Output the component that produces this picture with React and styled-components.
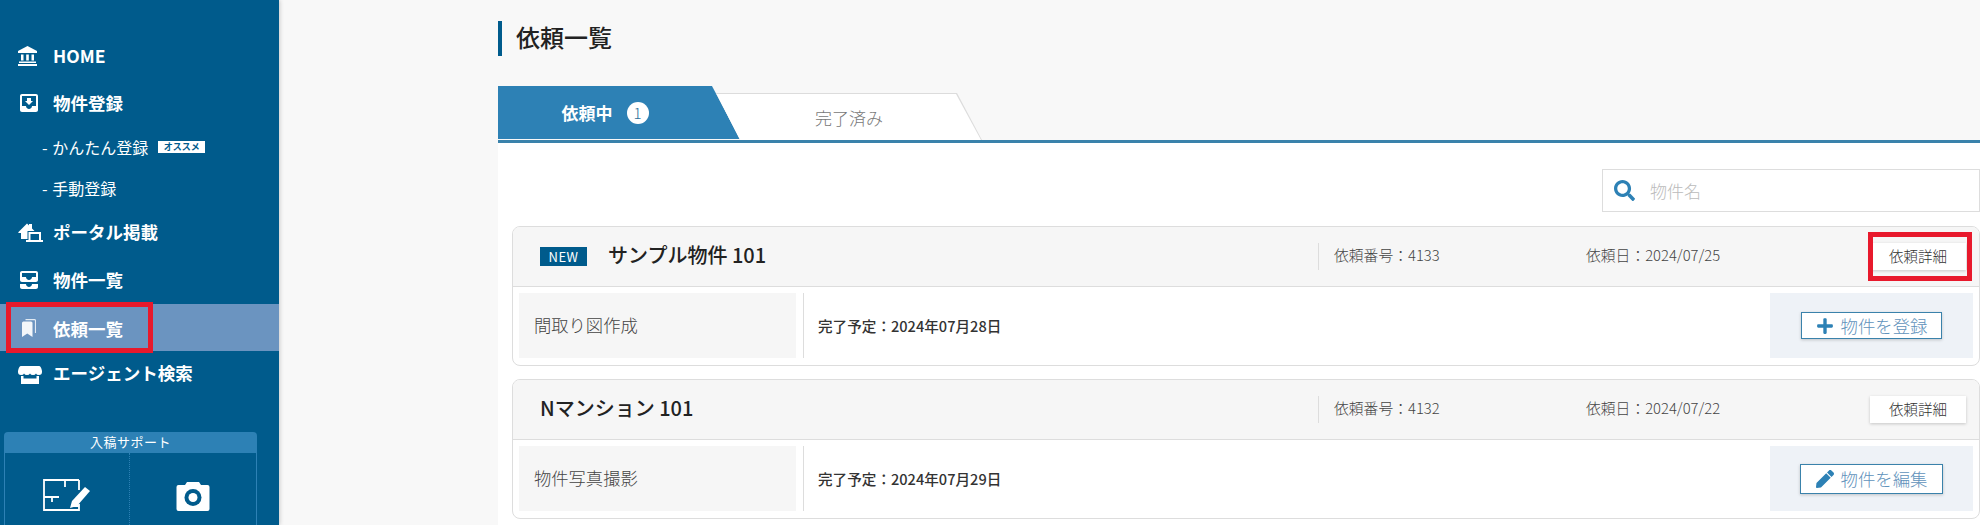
import React from 'react';
import styled, {createGlobalStyle} from 'styled-components';
import {FaPlus, FaPen, FaSearch} from 'react-icons/fa';
import {MdMoveToInbox, MdAllInbox} from 'react-icons/md';

const blue = '#005b8c';
const midBlue = '#2d81b5';
const red = '#e8192c';
const font = '"Noto Sans CJK JP", "Noto Sans", sans-serif';

const GlobalStyle = createGlobalStyle`
    html, body {
        margin: 0;
        height: 100%;
        overflow: hidden;
        background: #f8f8f8;
        font-family: ${font};
        color: #333;
    }
`;

const Page = styled.div`
    display: flex;
    width: 1980px;
    height: 525px;
    overflow: hidden;
`;

const Sidebar = styled.aside`
    flex: 0 0 279px;
    padding-top: 32px;
    background: ${blue};
    box-shadow: 1px 0 4px rgba(0, 0, 0, .18);
    color: #fff;
`;

const NavItem = styled.div`
    position: relative;
    display: flex;
    align-items: center;
    height: ${props => props.$height || 47}px;
    background: ${props => (props.$active ? '#6b94c0' : 'transparent')};
    font-size: 17.5px;
    font-weight: 700;
`;

const NavIcon = styled.span`
    display: flex;
    flex: 0 0 53px;
    box-sizing: border-box;
    padding-left: ${props => props.$left}px;
    font-size: 24px;
`;

const NavLabel = styled.span`
    margin-bottom: ${props => (props.$lift || 0) * 2}px;
`;

const SubItem = styled.div`
    display: flex;
    align-items: center;
    height: 41.5px;
    padding-left: 42px;
    font-size: 16px;
    font-weight: 400;
    word-spacing: 1px;
`;

const Recommend = styled.span`
    margin-left: 10px;
    padding: 0 5.5px;
    background: #fff;
    color: ${blue};
    font-size: 9px;
    font-weight: 700;
    line-height: 12px;
`;

const Highlight = styled.div`
    position: absolute;
    top: ${props => props.$top}px;
    left: ${props => props.$left}px;
    width: ${props => props.$width}px;
    height: ${props => props.$height}px;
    box-sizing: border-box;
    border: 5px solid ${red};
    pointer-events: none;
`;

const Support = styled.section`
    width: 253px;
    margin: 34px 0 0 4px;
`;

const SupportTitle = styled.div`
    height: 21px;
    background: ${midBlue};
    border-radius: 4px 4px 0 0;
    font-size: 13px;
    line-height: 20px;
    letter-spacing: .5px;
    text-align: center;
`;

const SupportGrid = styled.div`
    display: grid;
    grid-template-columns: 125px 1fr;
    height: 80px;
    border: 1px solid ${midBlue};
    border-top: 0;
`;

const SupportCell = styled.div`
    display: flex;
    justify-content: center;
    padding-top: 26px;
    border-right: ${props => (props.$divided ? `1px dotted ${midBlue}` : '0')};
`;

const Main = styled.main`
    flex: 1;
    padding: 21px 0 0 219px;
    min-width: 0;
`;

const Title = styled.h1`
    height: 35px;
    margin: 0 0 30px;
    padding-left: 14px;
    border-left: 4px solid ${blue};
    color: #222;
    font-size: 24px;
    font-weight: 500;
    line-height: 31px;
`;

const Tabs = styled.div`
    display: flex;
    align-items: flex-end;
    box-sizing: border-box;
    height: 57px;
    border-bottom: 3px solid #3a82ab;
`;

const ActiveTab = styled.div`
    display: flex;
    align-items: center;
    justify-content: center;
    gap: 14px;
    flex: 0 0 242px;
    height: 53px;
    margin-bottom: 1px;
    padding-right: 28px;
    box-sizing: border-box;
    clip-path: polygon(0 0, 214px 0, 242px 100%, 0 100%);
    background: ${midBlue};
    color: #fff;
    font-size: 17px;
    font-weight: 700;
`;

const Count = styled.span`
    display: flex;
    align-items: center;
    justify-content: center;
    width: 22px;
    height: 22px;
    border-radius: 50%;
    background: #fff;
    color: #2d6f99;
    font-size: 15px;
    font-weight: 300;
`;

const IdleTabEdge = styled.div`
    flex: 0 0 266px;
    height: 47px;
    margin-left: -24px;
    clip-path: polygon(0 0, 241px 0, 266px 100%, 24px 100%);
    background: #dcdcdc;
`;

const IdleTab = styled.div`
    display: flex;
    align-items: center;
    justify-content: center;
    height: 46px;
    margin-top: 1px;
    clip-path: polygon(0 0, 240px 0, 265px 100%, 24px 100%);
    background: #fff;
    color: #777;
    font-size: 17px;
    font-weight: 300;
`;

const Panel = styled.div`
    height: 400px;
    padding: 26px 0 0 14px;
    background: #fff;
`;

const SearchRow = styled.div`
    display: flex;
    justify-content: flex-end;
    margin-bottom: 14px;
`;

const SearchBox = styled.div`
    display: flex;
    align-items: center;
    gap: 15px;
    width: 378px;
    height: 43px;
    padding-left: 11px;
    box-sizing: border-box;
    border: 1px solid #ddd;
    color: #bbb;
    font-size: 17px;
    font-weight: 300;
    svg {
        color: ${midBlue};
        font-size: 21px;
    }
`;

const Card = styled.article`
    height: 140px;
    margin-bottom: 13px;
    box-sizing: border-box;
    border: 1px solid #ddd;
    border-radius: 8px;
    overflow: hidden;
`;

const CardHeader = styled.header`
    display: flex;
    align-items: center;
    height: 60px;
    box-sizing: border-box;
    border-bottom: 1px solid #ddd;
    padding-left: 27px;
    background: #f6f6f6;
`;

const NewBadge = styled.span`
    width: 47px;
    margin-right: 21px;
    background: ${blue};
    color: #fff;
    font-size: 13px;
    font-weight: 400;
    letter-spacing: .5px;
    line-height: 19px;
    text-align: center;
`;

const CardName = styled.h2`
    flex: 1;
    margin: 0 0 5px;
    color: #222;
    font-size: 20px;
    font-weight: 500;
`;

const Meta = styled.div`
    flex: 0 0 ${props => props.$width}px;
    height: 27px;
    padding-left: 15px;
    box-sizing: border-box;
    border-left: ${props => (props.$divided ? '1px solid #ddd' : '0')};
    color: #444;
    font-size: 14.8px;
    font-weight: 300;
    line-height: 24px;
`;

const DetailWrap = styled.div`
    position: relative;
    margin-right: 13px;
`;

const DetailButton = styled.div`
    width: 96px;
    height: 27px;
    background: #fff;
    box-shadow: 0 1px 3px rgba(0, 0, 0, .2);
    color: #333;
    font-size: 14.5px;
    font-weight: 300;
    line-height: 25px;
    text-align: center;
`;

const CardBody = styled.div`
    display: flex;
    height: 78px;
    box-sizing: border-box;
    padding: 6px 6px 7px;
`;

const TaskName = styled.div`
    display: flex;
    align-items: center;
    flex: 0 0 277px;
    margin-right: 7px;
    padding: 0 0 2px 15px;
    box-sizing: border-box;
    background: #f6f6f6;
    color: #444;
    font-size: 17.3px;
    font-weight: 300;
`;

const DueDate = styled.div`
    display: flex;
    align-items: center;
    flex: 1;
    padding-left: 14px;
    border-left: 1px solid #ddd;
    color: #333;
    font-size: 14.6px;
    font-weight: 500;
`;

const ActionArea = styled.div`
    display: flex;
    align-items: center;
    justify-content: center;
    flex: 0 0 203px;
    background: #eef2f7;
`;

const ActionButton = styled.div`
    display: flex;
    align-items: center;
    justify-content: center;
    gap: 7px;
    width: ${props => props.$width}px;
    height: ${props => props.$height}px;
    box-sizing: border-box;
    border: 1px solid #3a82ab;
    background: #fff;
    box-shadow: 0 1px 3px rgba(0, 0, 0, .2);
    color: #5f92bb;
    font-size: 17.4px;
    font-weight: 300;
    svg {
        color: ${midBlue};
        font-size: 18px;
    }
`;

const BankIcon = () =>
    <svg width="19" height="20" viewBox="0 0 19 20" fill="#fff">
        <path d="M9.5 0 L19 5 V7 H0 V5 Z" />
        <path d="M3 8.5 H5.5 V14.5 H3 Z M8.2 8.5 H10.8 V14.5 H8.2 Z M13.5 8.5 H16 V14.5 H13.5 Z" />
        <path d="M1 15.5 H18 V17 H1 Z M0 18 H19 V20 H0 Z" />
    </svg>;

const PortalIcon = () =>
    <svg width="25" height="19" viewBox="0 0 25 19" fill="#fff">
        <path d="M0 9.5 L9 .5 L11 2.5 V1 H14 V5.5 L16.5 8 H9.5 V16 H3 V10 H1 Z" />
        <path d="M10.5 9 H23 V17 H25 V19 H8 V17 H10.5 Z M12.5 11 V17 H21 V11 Z" fillRule="evenodd" />
    </svg>;

const BookmarksIcon = () =>
    <svg width="14" height="18" viewBox="0 0 14 18" fill="#fff">
        <path d="M3.5 .6 H12.5 a1 1 0 0 1 1 1 V14" fill="none" stroke="#fff" strokeWidth="1.2" opacity=".8" />
        <path d="M0 4 a1.5 1.5 0 0 1 1.5 -1.5 H9 a1.5 1.5 0 0 1 1.5 1.5 V18 L5.25 14.5 L0 18 Z" opacity=".92" />
    </svg>;

const StoreIcon = () =>
    <svg width="24" height="18" viewBox="0 0 24 18" fill="#fff">
        <path d="M3 0 H21 Q23 0 24 5 V6 Q24 9 21 9 Q18.5 9 18 7.5 Q17.3 9 15 9 Q12.8 9 12 7.5 Q11.2 9 9 9 Q6.8 9 6 7.5 Q5.5 9 3 9 Q0 9 0 6 V5 Q1 0 3 0 Z" />
        <path d="M3 10 H5.5 V12.5 H18.5 V10 H21 V18 H3 Z" />
    </svg>;

const FloorPlanIcon = () =>
    <svg width="48" height="34" viewBox="0 0 48 34" fill="none" stroke="#fff" strokeWidth="1.8">
        <path d="M36 1 H1 V31 H36 V25 M22 1 V8 M1 18 H16 M9 18 V23 M36 1 V11 M30 27 H36" />
        <path d="M27 29 L29 22 L42 8 L47 12 L34 27 Z" fill="#fff" stroke="none" />
    </svg>;

const CameraIcon = () =>
    <svg width="34" height="34" viewBox="0 0 34 34" fill="#fff">
        <path d="M2.5 6 H9 L11 3 H23 L25 6 H31.5 a2 2 0 0 1 2 2 V30 a2 2 0 0 1 -2 2 H2.5 a2 2 0 0 1 -2 -2 V8 a2 2 0 0 1 2 -2 Z" />
        <circle cx="17" cy="18.5" r="8.5" fill={blue} />
        <circle cx="17" cy="18.5" r="4.5" />
    </svg>;

const orders = [
    {id: 4133, name: 'サンプル物件 101', isNew: true, date: '2024/07/25', task: '間取り図作成', due: '2024年07月28日', marked: true},
    {id: 4132, name: 'Nマンション 101', date: '2024/07/22', task: '物件写真撮影', due: '2024年07月29日', edit: true}
];

const App = () =>
    <Page>
        <GlobalStyle />
        <Sidebar>
            <NavItem><NavIcon $left={18}><BankIcon /></NavIcon><NavLabel>HOME</NavLabel></NavItem>
            <NavItem><NavIcon $left={17}><MdMoveToInbox /></NavIcon><NavLabel>物件登録</NavLabel></NavItem>
            <SubItem>- かんたん登録<Recommend>オススメ</Recommend></SubItem>
            <SubItem>- 手動登録</SubItem>
            <NavItem $height={46}><NavIcon $left={18}><PortalIcon /></NavIcon><NavLabel $lift={1}>ポータル掲載</NavLabel></NavItem>
            <NavItem $height={49}><NavIcon $left={17}><MdAllInbox /></NavIcon><NavLabel $lift={.5}>物件一覧</NavLabel></NavItem>
            <NavItem $active>
                <NavIcon $left={22}><BookmarksIcon /></NavIcon><NavLabel $lift={-1}>依頼一覧</NavLabel>
                <Highlight $top={-2} $left={6} $width={147} $height={51} />
            </NavItem>
            <NavItem><NavIcon $left={18}><StoreIcon /></NavIcon><NavLabel $lift={2}>エージェント検索</NavLabel></NavItem>
            <Support>
                <SupportTitle>入稿サポート</SupportTitle>
                <SupportGrid>
                    <SupportCell $divided><FloorPlanIcon /></SupportCell>
                    <SupportCell><CameraIcon /></SupportCell>
                </SupportGrid>
            </Support>
        </Sidebar>
        <Main>
            <Title>依頼一覧</Title>
            <Tabs>
                <ActiveTab>依頼中<Count>1</Count></ActiveTab>
                <IdleTabEdge><IdleTab>完了済み</IdleTab></IdleTabEdge>
            </Tabs>
            <Panel>
                <SearchRow>
                    <SearchBox><FaSearch />物件名</SearchBox>
                </SearchRow>
                {orders.map(order =>
                    <Card key={order.id}>
                        <CardHeader>
                            {order.isNew && <NewBadge>NEW</NewBadge>}
                            <CardName>{order.name}</CardName>
                            <Meta $divided $width={253}>依頼番号：{order.id}</Meta>
                            <Meta $width={299}>依頼日：{order.date}</Meta>
                            <DetailWrap>
                                <DetailButton>依頼詳細</DetailButton>
                                {order.marked && <Highlight $top={-11} $left={-2} $width={104} $height={49} />}
                            </DetailWrap>
                        </CardHeader>
                        <CardBody>
                            <TaskName>{order.task}</TaskName>
                            <DueDate>完了予定：{order.due}</DueDate>
                            <ActionArea>
                                {order.edit ?
                                    <ActionButton $width={143} $height={30}><FaPen />物件を編集</ActionButton> :
                                    <ActionButton $width={141} $height={27}><FaPlus />物件を登録</ActionButton>}
                            </ActionArea>
                        </CardBody>
                    </Card>
                )}
            </Panel>
        </Main>
    </Page>;

export default App;
